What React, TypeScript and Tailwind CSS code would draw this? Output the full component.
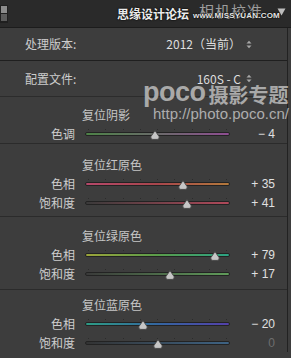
import React from "react";

const CJK = "font-['Noto_Sans_CJK_SC','Noto_Sans',sans-serif]";
const LAT = "font-['Liberation_Sans','Noto_Sans_CJK_SC',sans-serif]";

function Thumb() {
  return (
    <svg width="10" height="10" viewBox="0 0 10 10">
      <path
        d="M5 0.6 L9.1 6.6 Q9.9 9.4 7.2 9.4 L2.8 9.4 Q0.1 9.4 0.9 6.6 Z"
        fill="#c6c6c6"
        stroke="#3a3a3a"
        strokeWidth="0.8"
      />
    </svg>
  );
}

function UpDown() {
  return (
    <svg width="6" height="9" viewBox="0 0 6 9" className="ml-[5px]">
      <path d="M0.5 3.6 L3 0.8 L5.5 3.6 Z" fill="#a8a8a8" />
      <path d="M0.5 5.4 L3 8.2 L5.5 5.4 Z" fill="#a8a8a8" />
    </svg>
  );
}

type SliderProps = { label: string; value: number; track: string };

function SliderRow({ label, value, track }: SliderProps) {
  const pct = (value + 100) / 200;
  const text = value === 0 ? "0" : value > 0 ? `+ ${value}` : `− ${Math.abs(value)}`;
  const ticks = Array.from({ length: 9 });
  return (
    <div className="flex h-[19px] items-center">
      <div className={`w-[75px] text-right text-[12px] leading-none text-[#cdcdcd] ${CJK}`}>{label}</div>
      <div className="relative ml-[10px] flex h-[12px] w-[145px] flex-col">
        <div className="mt-[1px] flex h-[2px] justify-between px-[3px]">
          {ticks.map((_, i) => (
            <div key={i} className="h-[1px] w-[1px] bg-[#2c2c2c]" />
          ))}
        </div>
        <div className={`mt-[1px] h-[4px] w-full rounded-full border border-[#232323] ${track}`} />
        <div className="absolute top-[2px]" style={{ left: `${pct * 145 - 5}px` }}>
          <Thumb />
        </div>
      </div>
      <div
        className={`w-[45px] text-right text-[12px] leading-none ${LAT} ${
          value === 0 ? "text-[#6e6e6e]" : "text-[#e0e0e0]"
        }`}
      >
        {text}
      </div>
    </div>
  );
}

function Title({ children }: { children: React.ReactNode }) {
  return (
    <div className={`flex h-[19px] items-center pl-[82px] text-[12px] leading-none text-[#c6c6c6] ${CJK}`}>
      {children}
    </div>
  );
}

export default function App() {
  return (
    <div className="relative h-[358px] w-[291px] overflow-hidden bg-[#3d3d3d]">
      {/* header */}
      <div className="relative flex h-[28px] items-start border-b border-[#1c1c1c] bg-[#2a2a2a]">
        <div className="mt-[5px] flex h-[18px] w-[8px] flex-col gap-[1px] bg-[#1f1f1f] px-[1px] py-[1px]">
          <div className="h-[7px] w-full bg-[#8c8c8c]" />
          <div className="h-[7px] w-full bg-[#5c5c5c]" />
        </div>
        <div className={`ml-auto mt-[3px] text-[15px] leading-[15px] tracking-[1px] text-[#9c9c9c] ${CJK}`}>
          相机校准
        </div>
        <svg width="9" height="8" viewBox="0 0 9 8" className="ml-[14px] mr-[5px] mt-[8px]">
          <path d="M0.5 0.5 L8.5 0.5 L4.5 7.5 Z" fill="#bdbdbd" />
        </svg>
        {/* watermark */}
        <div className="absolute left-[117px] top-[7px] flex items-end">
          <span
            className={`text-[12px] font-bold leading-[13px] text-[#ececec] ${CJK} [text-shadow:0_0_2px_#000,0_0_1px_#000]`}
          >
            思缘设计论坛
          </span>
          <span
            className={`ml-[4px] text-[8px] font-bold leading-[9px] tracking-[0.2px] text-[#e6e6e6] ${LAT} [text-shadow:0_0_2px_#000,0_0_1px_#000]`}
          >
            www.MISSYUAN.COM
          </span>
        </div>
      </div>

      <div className="flex">
        <div className="w-[288px] border-r border-[#222222]">
          {/* 处理版本 */}
          <div className={`flex h-[33px] items-center border-b border-[#1f1f1f] pl-[25px] pr-[35px] text-[12px] leading-none text-[#cdcdcd] ${CJK}`}>
            <span>处理版本:</span>
            <span className="ml-auto text-[#dedede]">2012（当前）</span>
            <UpDown />
          </div>
          {/* 配置文件 */}
          <div className={`flex h-[36px] items-center border-b border-[#2c2c2c] pl-[25px] pr-[35px] text-[12px] leading-none text-[#cdcdcd] ${CJK}`}>
            <span>配置文件:</span>
            <span className="ml-auto text-[#dedede]">160S - C</span>
            <UpDown />
          </div>

          {/* 阴影 */}
          <div className="border-b border-[#2b2b2b] pt-[8px]">
            <Title>复位阴影</Title>
            <SliderRow label="色调" value={-4} track="bg-[linear-gradient(to_right,#4d8247,#6a6a6a,#8e4d91)]" />
          </div>

          {/* 红 */}
          <div className="border-b border-[#2b2b2b] pb-[4px] pt-[11px]">
            <Title>复位红原色</Title>
            <SliderRow label="色相" value={35} track="bg-[linear-gradient(to_right,#b5486a,#a8464c,#b3793b)]" />
            <SliderRow label="饱和度" value={41} track="bg-[linear-gradient(to_right,#3a3a3a,#b0495a)]" />
          </div>

          {/* 绿 */}
          <div className="border-b border-[#2b2b2b] pb-[6px] pt-[9px]">
            <Title>复位绿原色</Title>
            <SliderRow label="色相" value={79} track="bg-[linear-gradient(to_right,#9ba43a,#5a9c4a,#2ba283)]" />
            <SliderRow label="饱和度" value={17} track="bg-[linear-gradient(to_right,#3a3a3a,#609c5a)]" />
          </div>

          {/* 蓝 */}
          <div className="pt-[5px]">
            <Title>复位蓝原色</Title>
            <SliderRow label="色相" value={-20} track="bg-[linear-gradient(to_right,#2d9c85,#3466a0,#5340aa)]" />
            <SliderRow label="饱和度" value={0} track="bg-[linear-gradient(to_right,#333333,#3e6384)]" />
          </div>
        </div>
      </div>

      {/* POCO watermark */}
      <div className="absolute left-[143px] top-[78px]">
        <div className="flex items-start">
          <span className={`text-[27px] font-bold leading-[28px] tracking-[-0.5px] text-[#a9a9a9] ${LAT}`}>poco</span>
          <span className={`ml-[3px] mt-[7px] text-[20px] font-bold leading-[20px] text-[#a9a9a9] ${CJK}`}>摄影专题</span>
        </div>
        <div className={`ml-[10px] text-[15px] leading-[15px] text-[#adadad] ${LAT}`}>http://photo.poco.cn/</div>
      </div>
    </div>
  );
}
